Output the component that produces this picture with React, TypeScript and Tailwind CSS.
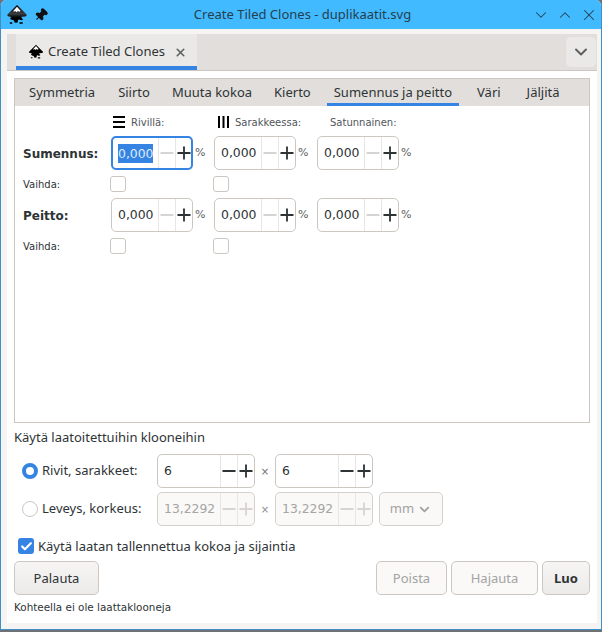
import { Check, ChevronDown, ChevronUp, Minus, Pin, Plus, X } from 'lucide-react'

const ui = "font-['Noto_Sans',sans-serif]"
const dv = "font-['DejaVu_Sans',sans-serif]"

function InkscapeLogo({ size, shaded = false }: { size: number; shaded?: boolean }) {
  return (
    <svg width={size} height={size} viewBox="0 0 24 24">
      <defs>
        <linearGradient id="ink-shade" x1="0" y1="0" x2="0" y2="1">
          <stop offset="0" stopColor="#000" />
          <stop offset="0.5" stopColor="#3a3f44" />
          <stop offset="0.7" stopColor="#000" />
        </linearGradient>
      </defs>
      <path d="M12 1 L22.5 11.5 Q23 13 21 13.5 L17 14 Q16 15 17.5 15.5 L18.5 16.5 Q18 18 16 17.5 L14 17 Q12.5 17.5 13 19 Q13 20.5 11 20.5 Q9 20.5 9 19 Q9 17.5 7 17.5 L5 16.5 Q4 15.5 5 15 L6 14.5 Q6 14 5 14 L3 13.5 Q1 13 1.5 11.5 Z" fill={shaded ? 'url(#ink-shade)' : '#000'} />
      <path d="M12 3 L16 7.5 L14.5 8.5 L13 7.5 L11.5 9 L10 7.5 L8.5 8.5 L8 7.5 Z" fill="#fff" />
      <rect x="14.5" y="20" width="4" height="1.6" rx="0.8" fill="#000" />
      <rect x="4" y="20" width="3" height="1.5" rx="0.7" fill="#000" />
    </svg>
  )
}

function Spin({
  value = '0,000',
  entry = 'w-[46px]',
  width = 'w-[82px]',
  focused = false,
  disabled = false,
  step = false,
}: {
  value?: string
  entry?: string
  width?: string
  focused?: boolean
  disabled?: boolean
  step?: boolean
}) {
  const border = focused
    ? 'border-2 border-[#3584e4] bg-white'
    : disabled
      ? 'border border-[#d5d0cc] bg-[#faf9f8]'
      : 'border border-[#cdc7c2] bg-white'
  return (
    <div className={`flex h-[34px] items-stretch rounded-[5px] ${width} ${border} ${dv}`}>
      <div className={`flex shrink-0 items-center text-[12.4px] ${focused ? 'w-[45px] pl-[5px]' : `${entry} pl-[6px]`} ${disabled ? 'text-[#a5a5a3]' : 'text-[#2e3436]'}`}>
        {focused ? <span className="bg-[#3584e4] leading-[19px] text-[#dfeafa]">{value}</span> : value}
      </div>
      <div className="flex w-[17px] shrink-0 items-center justify-center border-l border-[#e8e6e3]">
        <Minus size={20} strokeWidth={2.2} className={`shrink-0 ${step ? (disabled ? 'text-[#d6d5d3]' : 'text-[#2e3436]') : 'text-[#d5d5d3]'}`} />
      </div>
      <div className="flex w-[17px] shrink-0 items-center justify-center border-l border-[#e8e6e3]">
        <Plus size={20} strokeWidth={2.2} className={`shrink-0 ${disabled ? 'text-[#d6d5d3]' : 'text-[#2e3436]'}`} />
      </div>
    </div>
  )
}

function Box() {
  return <div className="h-4 w-4 rounded-[3px] border border-[#cdc7c2] bg-white" />
}

function SpinPct({ focused = false }: { focused?: boolean }) {
  return (
    <div className="flex w-[103px] items-center gap-[2px]">
      <Spin focused={focused} />
      <span className={`${dv} text-[11px] tracking-[-0.5px] text-[#5b5f60]`}>%</span>
    </div>
  )
}

function Label({ label }: { label: string }) {
  return <span className={`${dv} w-[96px] pl-[8px] pt-[1px] text-[12px] font-bold text-[#2e3436]`}>{label}</span>
}

function Button({ label, width, disabled = false, bold = false }: { label: string; width: string; disabled?: boolean; bold?: boolean }) {
  return (
    <div
      className={`${ui} flex h-[34px] items-center justify-center rounded-[5px] border border-[#cdc7c2] pt-[1px] text-[13px] ${width} ${
        disabled ? 'bg-[#faf9f8] text-[#a3a3a1]' : 'bg-gradient-to-b from-[#f6f5f4] to-[#edebe9] text-[#2e3436]'
      } ${bold ? 'font-bold' : ''}`}
    >
      {label}
    </div>
  )
}

const tabs = [
  { label: 'Symmetria', className: 'ml-[7px] pt-[1px]' },
  { label: 'Siirto', className: 'ml-[9px] pt-[1px]' },
  { label: 'Muuta kokoa', className: 'ml-[8px] pt-[1px]' },
  { label: 'Kierto', className: 'ml-[8px] pt-[1px]' },
  { label: 'Sumennus ja peitto', className: 'ml-[9px] border-b-[3px] border-[#3584e4] pt-[4px]' },
  { label: 'Väri', className: 'ml-[11px] pt-[1px]' },
  { label: 'Jäljitä', className: 'ml-[12px] pt-[1px]' },
]

export default function App() {
  return (
    <div className="h-[632px] w-[602px] overflow-hidden bg-[#6f7275]">
      <div className="flex h-[630px] w-[602px] flex-col overflow-hidden rounded-t-[6px] border-x border-b border-[#3d8fc4] bg-[#f5f4f3]">
        {/* Title bar */}
        <div className={`${ui} relative flex h-[29px] shrink-0 items-center bg-[#42baff] text-[13px] text-[#24404f]`}>
          <div className="ml-[5px] flex items-center gap-[6px]">
            <InkscapeLogo size={22} shaded />
            <Pin size={14} className="rotate-45 fill-[#111] text-[#111]" />
          </div>
          <span className="absolute inset-x-0 pl-[3px] text-center">Create Tiled Clones - duplikaatit.svg</span>
          <div className="relative ml-auto mr-[3px] flex items-center gap-[6px] text-[#24404f]">
            <ChevronDown size={18} strokeWidth={1.4} />
            <ChevronUp size={18} strokeWidth={1.4} />
            <X size={18} strokeWidth={1.4} />
          </div>
        </div>

        {/* Dialog body */}
        <div className="mb-[6px] ml-[6px] mr-[4px] mt-[5px] flex flex-1 flex-col bg-white">
          {/* Dock tab bar */}
          <div className="flex h-[37px] shrink-0 items-stretch border-b border-[#cdc7c2] bg-[#e1dedb] pl-[9px] pr-[1px]">
            <div className={`${ui} flex w-[181px] items-center gap-[4px] border-b-[4px] border-[#3584e4] bg-[#ebe9e8] pl-[12px] pt-[4px] text-[13px] text-[#2e3436]`}>
              <InkscapeLogo size={16} />
              <span>Create Tiled Clones</span>
              <X size={13} strokeWidth={3} className="ml-[5px] text-[#5d6061]" />
            </div>
            <div className="ml-auto flex items-center">
              <div className="flex h-[30px] w-[30px] items-center justify-center rounded-[5px] bg-[#ebe9e7]">
                <ChevronDown size={20} strokeWidth={2.4} className="text-[#5d6061]" />
              </div>
            </div>
          </div>

          {/* Notebook */}
          <div className="mx-[7px] mt-[7px] flex h-[345px] shrink-0 flex-col border border-[#cdc7c2]">
            <div className={`${ui} flex h-[27px] shrink-0 items-stretch bg-[#e1dedb] text-[13px] text-[#2e3436]`}>
              {tabs.map((t) => (
                <div key={t.label} className={`flex items-center justify-center whitespace-nowrap px-[7px] ${t.className}`}>
                  {t.label}
                </div>
              ))}
            </div>

            <div className="flex-1 bg-white">
              <div className={`${dv} flex h-[30px] items-center pl-[98px] pt-[2px] text-[10px] text-[#50555a]`}>
                <div className="flex w-[103px] items-center gap-[6px]">
                  <svg width="12" height="12" viewBox="0 0 12 12" fill="#000">
                    <rect y="0" width="12" height="2" />
                    <rect y="5" width="12" height="2" />
                    <rect y="10" width="12" height="2" />
                  </svg>
                  <span>Rivillä:</span>
                </div>
                <div className="flex w-[103px] items-center gap-[6px] pl-[2px]">
                  <svg width="11" height="12" viewBox="0 0 11 12" fill="#000">
                    <rect x="0" width="2" height="12" />
                    <rect x="4.5" width="2" height="12" />
                    <rect x="9" width="2" height="12" />
                  </svg>
                  <span>Sarakkeessa:</span>
                </div>
                <span className="pl-[11px]">Satunnainen:</span>
              </div>

              <div className="flex items-center">
                <Label label="Sumennus:" />
                <SpinPct focused />
                <SpinPct />
                <SpinPct />
              </div>
              <div className="flex h-[28px] items-center">
                <span className={`${dv} w-[95px] pl-[8px] text-[10px] text-[#2e3436]`}>Vaihda:</span>
                <div className="w-[103px]"><Box /></div>
                <Box />
              </div>
              <div className="flex items-center">
                <Label label="Peitto:" />
                <SpinPct />
                <SpinPct />
                <SpinPct />
              </div>
              <div className="flex h-[28px] items-center">
                <span className={`${dv} w-[95px] pl-[8px] text-[10px] text-[#2e3436]`}>Vaihda:</span>
                <div className="w-[103px]"><Box /></div>
                <Box />
              </div>
            </div>
          </div>

          {/* Apply section */}
          <div className={`${ui} mx-[7px] mt-[5px] text-[13px] text-[#2e3436]`}>
            <div className="flex h-[20px] items-center">Käytä laatoitettuihin klooneihin</div>

            <div className="mt-[6px] flex h-[34px] items-center">
              <div className="ml-[8px] h-4 w-4 rounded-full border-[4.5px] border-[#3584e4] bg-white" />
              <span className="ml-[4px] w-[115px]">Rivit, sarakkeet:</span>
              <Spin value="6" width="w-[98px]" entry="w-[62px]" step />
              <span className={`${dv} w-[20px] text-center text-[10px] text-[#6a6d6e]`}>×</span>
              <Spin value="6" width="w-[98px]" entry="w-[62px]" step />
            </div>

            <div className="mt-[4px] flex h-[34px] items-center">
              <div className="ml-[8px] h-4 w-4 rounded-full border border-[#cdc7c2] bg-white" />
              <span className="ml-[4px] w-[115px]">Leveys, korkeus:</span>
              <Spin value="13,2292" width="w-[98px]" entry="w-[62px]" disabled step />
              <span className={`${dv} w-[20px] text-center text-[10px] text-[#8b8d8e]`}>×</span>
              <Spin value="13,2292" width="w-[98px]" entry="w-[62px]" disabled step />
              <div className="ml-[6px] flex h-[34px] w-[64px] items-center justify-center gap-[3px] rounded-[5px] border border-[#d5d0cc] bg-[#faf9f8] text-[#a3a3a1]">
                mm
                <ChevronDown size={15} strokeWidth={3} />
              </div>
            </div>

            <div className="mt-[8px] flex h-[24px] items-center">
              <div className="ml-[4px] flex h-4 w-4 items-center justify-center rounded-[3px] bg-[#3584e4]">
                <Check size={13} strokeWidth={4} className="text-white" />
              </div>
              <span className="ml-[4px] pt-[2px]">Käytä laatan tallennettua kokoa ja sijaintia</span>
            </div>

            <div className="mt-[3px] flex items-center">
              <Button label="Palauta" width="w-[85px]" />
              <div className="ml-auto flex items-center gap-[4px]">
                <Button label="Poista" width="w-[71px]" disabled />
                <Button label="Hajauta" width="w-[87px]" disabled />
                <Button label="Luo" width="w-[48px]" bold />
              </div>
            </div>

            <div className={`${dv} mt-[5px] text-[10.4px] text-[#2e3436]`}>Kohteella ei ole laattaklooneja</div>
          </div>
        </div>
      </div>
    </div>
  )
}
